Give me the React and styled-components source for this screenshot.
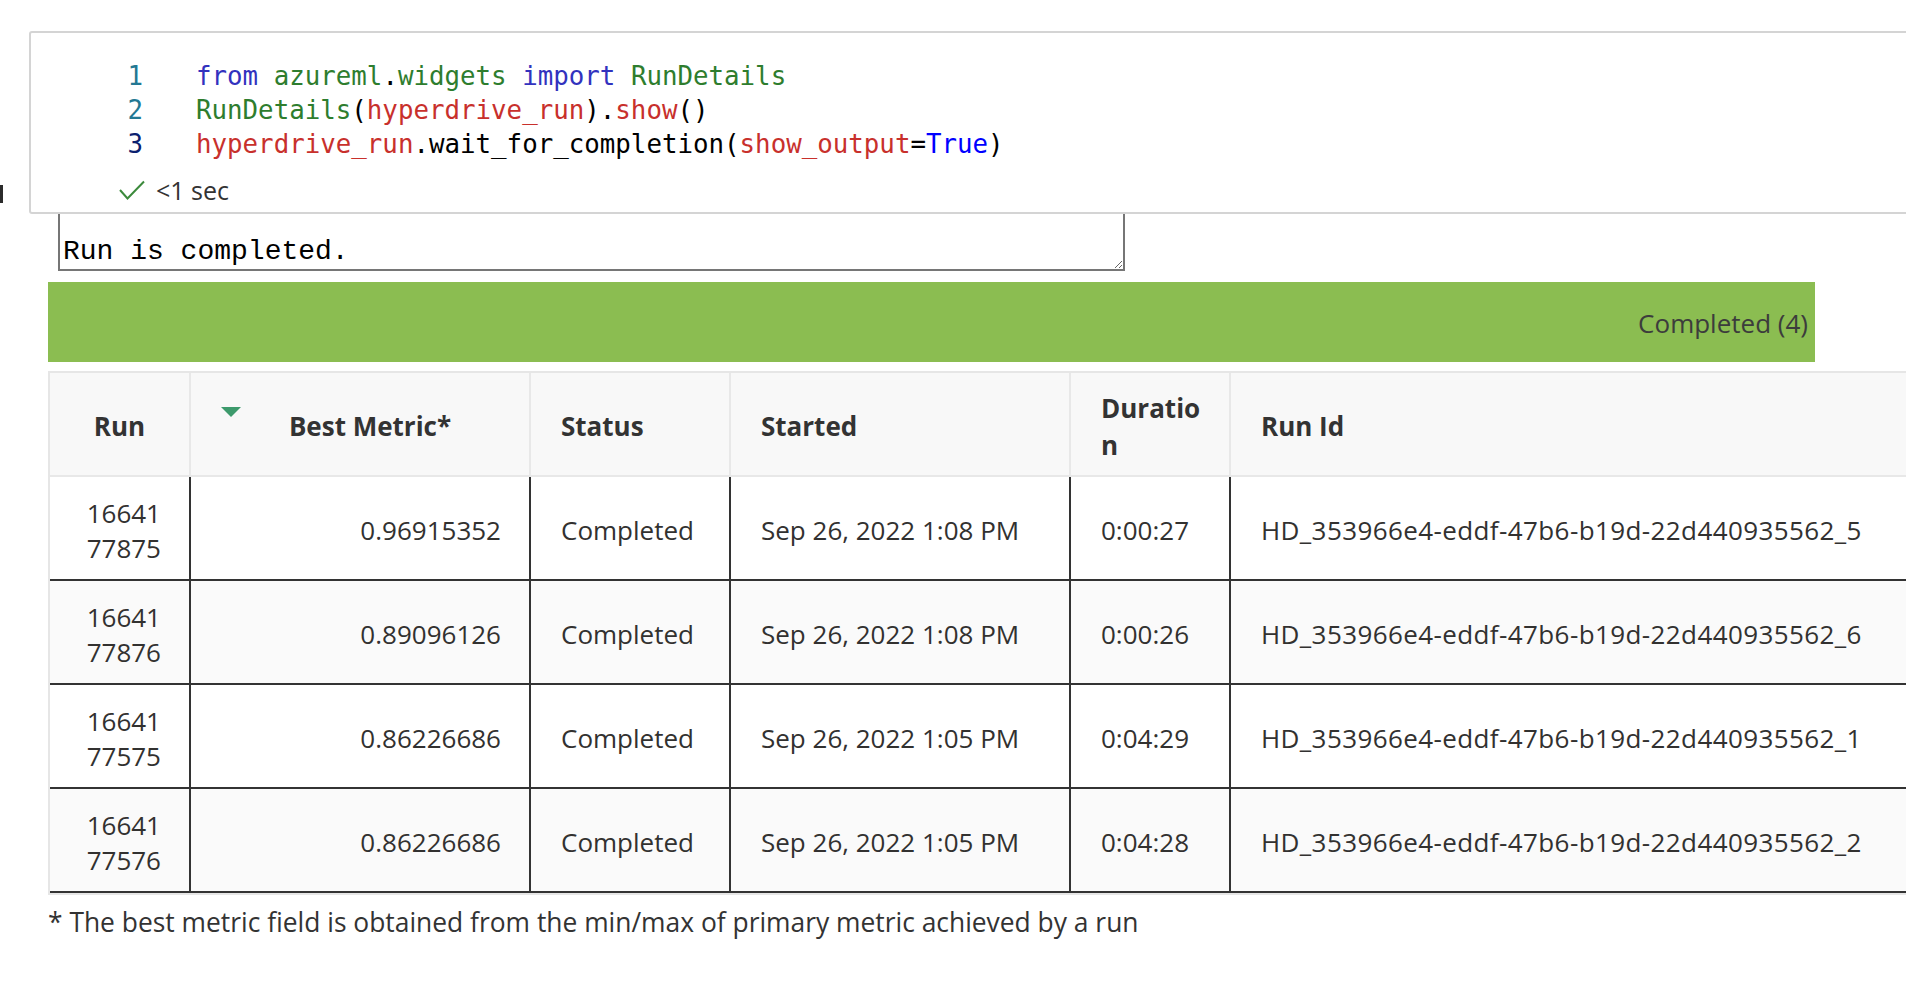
import React from "react";
import styled, { createGlobalStyle } from "styled-components";

const GlobalStyle = createGlobalStyle`
  html, body {
    margin: 0;
    padding: 0;
    background: #ffffff;
    overflow: hidden;
  }
  body {
    font-family: "Open Sans", "Noto Sans", sans-serif;
    color: #323130;
  }
`;

const Page = styled.div`
  width: 1906px;
  height: 982px;
  overflow: hidden;
  padding-top: 31px;
  box-sizing: border-box;
`;

/* ---------- code cell ---------- */

const CellRow = styled.div`
  display: flex;
  width: calc(100% + 60px);
`;

const Gutter = styled.div`
  width: 29px;
  flex: none;
  display: flex;
  flex-direction: column;
  justify-content: flex-end;
  padding-bottom: 11px;
  box-sizing: border-box;
`;

const FocusMark = styled.div`
  width: 3px;
  height: 18px;
  background: #2b2b2b;
`;

const CodeCell = styled.div`
  flex: 1;
  border: 2px solid #d4d4d4;
  border-radius: 3px;
  background: #ffffff;
  padding: 26px 0 7px;
`;

const CodeLine = styled.div`
  display: flex;
  height: 34px;
  align-items: center;
  font-family: "DejaVu Sans Mono", "Liberation Mono", monospace;
  font-size: 25.8px;
  line-height: 34px;
  white-space: pre;
`;

const LineNo = styled.span`
  width: 112px;
  flex: none;
  text-align: right;
  color: ${(p) => (p.$active ? "#0b216f" : "#237893")};
`;

const CodeText = styled.span`
  margin-left: 53px;
  color: #000000;
`;

const tokenColors = {
  kw: "#3232be",
  cls: "#2e7d2e",
  var: "#c8302c",
  bool: "#0000ff",
  p: "#000000",
};

const Tok = styled.span`
  color: ${(p) => tokenColors[p.$k]};
`;

const ExecStatus = styled.div`
  margin-top: 14px;
  height: 30px;
  display: flex;
  align-items: center;
  gap: 11px;
  padding-left: 88px;
  font-size: 25px;
  color: #333333;
`;

const CheckIcon = () => (
  <svg width="26" height="20" viewBox="0 0 26 20" aria-hidden="true">
    <polyline
      points="1,10 8.5,18.5 25,1.5"
      fill="none"
      stroke="#3c8a3c"
      strokeWidth="2"
    />
  </svg>
);

/* ---------- output area ---------- */

const Output = styled.div`
  padding-left: 48px;
  display: flex;
  flex-direction: column;
  align-items: flex-start;
`;

const LogBox = styled.textarea`
  margin: 0 0 0 10px;
  width: 1067px;
  height: 57px;
  box-sizing: border-box;
  border: 2px solid #767676;
  border-top: none;
  padding: 22px 3px 0;
  font-family: "Liberation Mono", "Courier New", monospace;
  font-size: 28px;
  line-height: 32px;
  color: #000000;
  background: #ffffff;
  overflow: hidden;
  resize: both;
  outline: none;
`;

const ProgressBar = styled.div`
  margin-top: 11px;
  width: 1767px;
  height: 80px;
  box-sizing: border-box;
  background: #8bbd51;
  display: flex;
  justify-content: flex-end;
  align-items: center;
  padding: 2px 7px 0 0;
  font-size: 26px;
  color: #3c3c3c;
`;

/* ---------- runs table ---------- */

const columns = "141px 340px 200px 340px 160px 1fr";

const Table = styled.div`
  margin-top: 9px;
  width: 1900px;
  box-sizing: border-box;
  border: 2px solid #e6e6e6;
  display: flex;
  flex-direction: column;
`;

const HeaderRow = styled.div`
  display: grid;
  grid-template-columns: ${columns};
  background: #f8f8f8;
`;

const HeaderCell = styled.div`
  height: 104px;
  box-sizing: border-box;
  border-right: 2px solid #e8e8e8;
  border-bottom: 2px solid #e8e8e8;
  padding: 5px ${(p) => (p.$narrow ? "22px" : "30px")} 0 30px;
  display: flex;
  align-items: center;
  justify-content: ${(p) => (p.$align === "center" ? "center" : "flex-start")};
  font-weight: 700;
  font-size: 26px;
  line-height: 37px;
  color: #333333;
  overflow-wrap: anywhere;
`;

const SortMark = styled.span`
  align-self: flex-start;
  margin-top: 29px;
  flex: none;
  width: 0;
  height: 0;
  border-left: 10px solid transparent;
  border-right: 10px solid transparent;
  border-top: 10px solid #3d9a6c;
`;

const SortLabel = styled.span`
  flex: 1;
  text-align: center;
`;

const BodyRow = styled.div`
  display: grid;
  grid-template-columns: ${columns};
  background: ${(p) => (p.$stripe ? "#fafafa" : "#ffffff")};
`;

const BodyCell = styled.div`
  min-height: 104px;
  box-sizing: border-box;
  border-right: ${(p) => (p.$last ? "none" : "2px solid #333333")};
  border-bottom: 2px solid #333333;
  padding: 5px ${(p) => (p.$align === "right" ? "28px" : "30px")} 0 30px;
  display: flex;
  align-items: center;
  justify-content: ${(p) => (p.$align === "right" ? "flex-end" : "flex-start")};
  text-align: ${(p) => p.$align || "left"};
  font-size: 26px;
  line-height: 35px;
  letter-spacing: ${(p) => (p.$spaced ? "0.4px" : "normal")};
  word-break: break-all;
`;

const Footnote = styled.div`
  margin-top: 10px;
  font-size: 26.4px;
  line-height: 35px;
  color: #333333;
`;

const runs = [
  {
    run: "1664177875",
    metric: "0.96915352",
    status: "Completed",
    started: "Sep 26, 2022 1:08 PM",
    duration: "0:00:27",
    id: "HD_353966e4-eddf-47b6-b19d-22d440935562_5",
  },
  {
    run: "1664177876",
    metric: "0.89096126",
    status: "Completed",
    started: "Sep 26, 2022 1:08 PM",
    duration: "0:00:26",
    id: "HD_353966e4-eddf-47b6-b19d-22d440935562_6",
  },
  {
    run: "1664177575",
    metric: "0.86226686",
    status: "Completed",
    started: "Sep 26, 2022 1:05 PM",
    duration: "0:04:29",
    id: "HD_353966e4-eddf-47b6-b19d-22d440935562_1",
  },
  {
    run: "1664177576",
    metric: "0.86226686",
    status: "Completed",
    started: "Sep 26, 2022 1:05 PM",
    duration: "0:04:28",
    id: "HD_353966e4-eddf-47b6-b19d-22d440935562_2",
  },
];

const codeLines = [
  [
    ["kw", "from"],
    ["p", " "],
    ["cls", "azureml"],
    ["p", "."],
    ["cls", "widgets"],
    ["p", " "],
    ["kw", "import"],
    ["p", " "],
    ["cls", "RunDetails"],
  ],
  [
    ["cls", "RunDetails"],
    ["p", "("],
    ["var", "hyperdrive_run"],
    ["p", ")."],
    ["var", "show"],
    ["p", "()"],
  ],
  [
    ["var", "hyperdrive_run"],
    ["p", ".wait_for_completion("],
    ["var", "show_output"],
    ["p", "="],
    ["bool", "True"],
    ["p", ")"],
  ],
];

export default function App() {
  return (
    <>
      <GlobalStyle />
      <Page>
        <CellRow>
          <Gutter>
            <FocusMark />
          </Gutter>
          <CodeCell>
            {codeLines.map((tokens, i) => (
              <CodeLine key={i}>
                <LineNo $active={i === 2}>{i + 1}</LineNo>
                <CodeText>
                  {tokens.map(([k, t], j) => (
                    <Tok key={j} $k={k}>
                      {t}
                    </Tok>
                  ))}
                </CodeText>
              </CodeLine>
            ))}
            <ExecStatus>
              <CheckIcon />
              <span>&lt;1 sec</span>
            </ExecStatus>
          </CodeCell>
        </CellRow>

        <Output>
          <LogBox readOnly defaultValue="Run is completed." />
          <ProgressBar>Completed (4)</ProgressBar>
          <Table>
            <HeaderRow>
              <HeaderCell $align="center">Run</HeaderCell>
              <HeaderCell>
                <SortMark />
                <SortLabel>Best Metric*</SortLabel>
              </HeaderCell>
              <HeaderCell>Status</HeaderCell>
              <HeaderCell>Started</HeaderCell>
              <HeaderCell $narrow>Duration</HeaderCell>
              <HeaderCell>Run Id</HeaderCell>
            </HeaderRow>
            {runs.map((r, i) => (
              <BodyRow key={r.run} $stripe={i % 2 === 1}>
                <BodyCell $align="right">{r.run}</BodyCell>
                <BodyCell $align="right">{r.metric}</BodyCell>
                <BodyCell>{r.status}</BodyCell>
                <BodyCell>{r.started}</BodyCell>
                <BodyCell>{r.duration}</BodyCell>
                <BodyCell $last $spaced>
                  {r.id}
                </BodyCell>
              </BodyRow>
            ))}
          </Table>
          <Footnote>
            * The best metric field is obtained from the min/max of primary
            metric achieved by a run
          </Footnote>
        </Output>
      </Page>
    </>
  );
}
